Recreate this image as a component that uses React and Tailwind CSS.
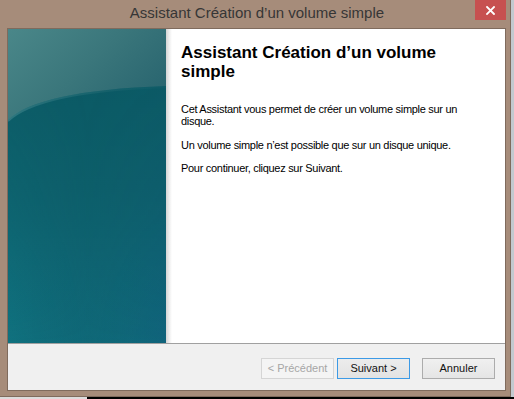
import React from "react";

function TealPanel() {
  return (
    <svg width="158" height="314" viewBox="0 0 158 314" className="block">
      <defs>
        <linearGradient id="base" x1="0" y1="0" x2="0" y2="1">
          <stop offset="0" stopColor="#0b5862" />
          <stop offset="0.5" stopColor="#0d5e6a" />
          <stop offset="1" stopColor="#0f6878" />
        </linearGradient>
        <linearGradient id="side" x1="0" y1="0" x2="1" y2="0">
          <stop offset="0" stopColor="#12848c" stopOpacity="0.35" />
          <stop offset="0.5" stopColor="#0f6f78" stopOpacity="0.05" />
          <stop offset="1" stopColor="#15508a" stopOpacity="0.2" />
        </linearGradient>
        <linearGradient id="sideMask" x1="0" y1="0" x2="0" y2="1">
          <stop offset="0" stopColor="#fff" stopOpacity="0" />
          <stop offset="0.6" stopColor="#fff" stopOpacity="0.4" />
          <stop offset="1" stopColor="#fff" stopOpacity="1" />
        </linearGradient>
        <mask id="m">
          <rect width="158" height="314" fill="url(#sideMask)" />
        </mask>
        <linearGradient id="top" x1="0" y1="0" x2="1" y2="0.6">
          <stop offset="0" stopColor="#4a8789" />
          <stop offset="0.55" stopColor="#3a767b" />
          <stop offset="1" stopColor="#2a6670" />
        </linearGradient>
        <linearGradient id="glow" x1="0" y1="0" x2="1" y2="0">
          <stop offset="0" stopColor="#4f9096" stopOpacity="0.5" />
          <stop offset="1" stopColor="#2a6a72" stopOpacity="0.1" />
        </linearGradient>
      </defs>
      <rect width="158" height="314" fill="url(#base)" />
      <rect width="158" height="314" fill="url(#side)" mask="url(#m)" />
      <path d="M0,91 C20,72 70,60 158,57 L158,0 L0,0 Z" fill="url(#top)" />
      <path d="M0,92 C20,73 70,61 158,58" fill="none" stroke="url(#glow)" strokeWidth="2" />
    </svg>
  );
}

function Btn({ children, variant }) {
  const base =
    "w-[73px] h-[21px] flex items-center justify-center text-[11px] border";
  if (variant === "disabled")
    return (
      <div className={base + " border-[#d5d5d5] bg-[#f4f4f4] text-[#a6a6a6]"}>
        {children}
      </div>
    );
  if (variant === "default")
    return (
      <div
        className={
          base +
          " border-[#3c9ae6] bg-linear-to-b from-[#ececec] to-[#e3e3e3] text-[#111]"
        }
      >
        {children}
      </div>
    );
  return (
    <div
      className={
        base +
        " border-[#acacac] bg-linear-to-b from-[#f0f0f0] to-[#e5e5e5] text-[#111]"
      }
    >
      {children}
    </div>
  );
}

export default function App() {
  return (
    <div
      className="w-[514px] h-[399px] flex flex-col bg-black overflow-hidden"
      style={{ fontFamily: '"Liberation Sans", Arial, sans-serif' }}
    >
      <div className="flex h-[397px]">
        <div className="w-[511px] h-[397px] bg-[#a68c7a] border-r border-b border-[#7f6b5d] flex flex-col">
          {/* title bar */}
          <div className="relative h-[28px] flex items-start justify-center pt-[4px] pl-[4px]">
            <span className="text-[15px] leading-[18px] text-[#363636]">
              Assistant Création d’un volume simple
            </span>
            <div className="absolute top-0 right-[4px] w-[31px] h-[20px] bg-[#c75050] flex items-center justify-center">
              <svg width="9" height="9" viewBox="0 0 9 9">
                <path
                  d="M1,1 L8,8 M8,1 L1,8"
                  stroke="#fff"
                  strokeWidth="1.8"
                  strokeLinecap="square"
                />
              </svg>
            </div>
          </div>
          {/* client */}
          <div className="ml-[7px] w-[499px] h-[363px] border border-[#7f6b5d] flex flex-col">
            <div className="h-[314px] flex">
              <TealPanel />
              <div className="flex-1 flex bg-white">
                <div className="w-[6px] h-full bg-linear-to-r from-[#d4d4d4] via-[#ececec] to-white" />
                <div className="flex-1 pl-[9px] pt-[14px]">
                  <div className="w-[300px] text-[17px] leading-[19px] font-bold text-black">
                    Assistant Création d’un volume simple
                  </div>
                  <div className="w-[300px] mt-[22px] text-[11px] leading-[12px] tracking-[-0.3px] text-black">
                    <p>
                      Cet Assistant vous permet de créer un volume simple sur un
                      disque.
                    </p>
                    <p className="mt-[12px]">
                      Un volume simple n’est possible que sur un disque unique.
                    </p>
                    <p className="mt-[11px]">Pour continuer, cliquez sur Suivant.</p>
                  </div>
                </div>
              </div>
            </div>
            <div className="h-px bg-[#a0a0a0]" />
            <div className="flex-1 bg-[#f0f0f0] flex justify-end items-start pt-[14px] pr-[10px]">
              <Btn variant="disabled">&lt; Précédent</Btn>
              <div className="w-[3px]" />
              <Btn variant="default">Suivant &gt;</Btn>
              <div className="w-[12px]" />
              <Btn>Annuler</Btn>
            </div>
          </div>
        </div>
        <div className="flex-1 bg-[#c3c9cf]" />
      </div>
      <div className="h-[2px] flex">
        <div className="w-[87px] bg-[#dcdcdc]" />
        <div className="flex-1 bg-black" />
      </div>
    </div>
  );
}
